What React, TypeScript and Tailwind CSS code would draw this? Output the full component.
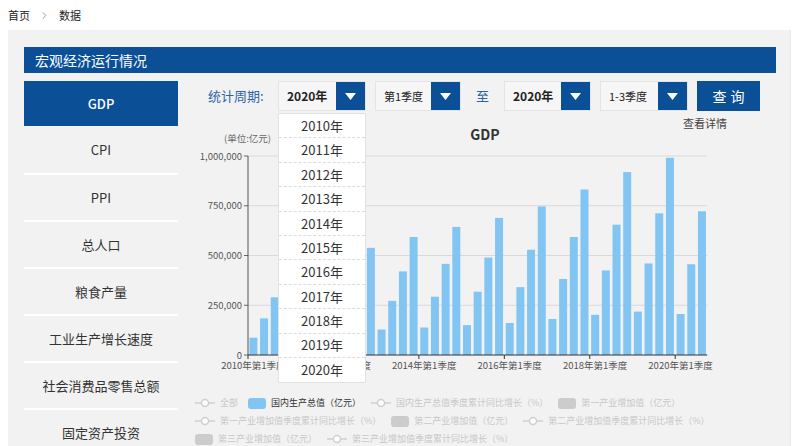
import { ChevronRight } from "lucide-react";

const gdpData = [
  87000, 184000, 290000, 412119,
  104000, 220000, 340000, 487940,
  117000, 245000, 378000, 538580,
  128000, 272000, 420000, 592963,
  138000, 293000, 458000, 643563,
  150000, 318000, 490000, 688858,
  161000, 341000, 529000, 746395,
  181000, 382000, 593000, 832036,
  202000, 425000, 655000, 919281,
  218000, 460000, 712000, 990865,
  206000, 456000, 722000,
];

const sideItems = ["CPI", "PPI", "总人口", "粮食产量", "工业生产增长速度", "社会消费品零售总额", "固定资产投资"];
const years = ["2010年", "2011年", "2012年", "2013年", "2014年", "2015年", "2016年", "2017年", "2018年", "2019年", "2020年"];

const X0 = 248;
const BAND = 10.68;
const Y0 = 355;
const toY = (v: number) => Y0 - (v * 199) / 1000000;

const ArrowBtn = () => (
  <div className="w-[29px] h-full bg-[#0b4f97] flex items-center justify-center">
    <svg width="11" height="7" viewBox="0 0 11 7">
      <path d="M0 0 H11 L5.5 7 Z" fill="#fff" />
    </svg>
  </div>
);

const Select = ({ text, width, bold }: { text: string; width: string; bold?: boolean }) => (
  <div className={`${width} h-[30px] flex bg-[#f6f6f6] border border-[#e4e4e4]`}>
    <div className={`flex-1 flex items-center pl-[8px] text-[#222] ${bold ? "font-bold text-[12px]" : "text-[11px]"}`}>{text}</div>
    <ArrowBtn />
  </div>
);

const LineMark = () => (
  <svg width="20" height="10" viewBox="0 0 20 10" className="shrink-0">
    <line x1="0" y1="5" x2="20" y2="5" stroke="#cfcfcf" strokeWidth="1.5" />
    <circle cx="10" cy="5" r="3.5" fill="#fff" stroke="#cfcfcf" strokeWidth="1.5" />
  </svg>
);

const RectMark = ({ color }: { color: string }) => (
  <div className="w-[18px] h-[11px] rounded-[3px] shrink-0" style={{ backgroundColor: color }} />
);

const legend = [
  { kind: "line", label: "全部" },
  { kind: "blue", label: "国内生产总值（亿元）" },
  { kind: "line", label: "国内生产总值季度累计同比增长（%）" },
  { kind: "gray", label: "第一产业增加值（亿元）" },
  { kind: "line", label: "第一产业增加值季度累计同比增长（%）" },
  { kind: "gray", label: "第二产业增加值（亿元）" },
  { kind: "line", label: "第二产业增加值季度累计同比增长（%）" },
  { kind: "gray", label: "第三产业增加值（亿元）" },
  { kind: "line", label: "第三产业增加值季度累计同比增长（%）" },
];

const Chart = () => {
  const grid = [0, 250000, 500000, 750000, 1000000];
  const labels = ["2010年第1季度", "2012年第1季度", "2014年第1季度", "2016年第1季度", "2018年第1季度", "2020年第1季度"];
  const xEnd = X0 + gdpData.length * BAND;
  return (
    <svg width="600" height="283" viewBox="178 111 600 283" className="block">
      <text x="485" y="140" textAnchor="middle" fontSize="14" fontWeight="bold" fill="#333">GDP</text>
      <text x="727" y="128" textAnchor="end" fontSize="11" fill="#444">查看详情</text>
      <text x="271" y="142" textAnchor="end" fontSize="9.5" fill="#666">(单位:亿元)</text>
      {grid.map((g) => (
        <g key={g}>
          {g > 0 && <line x1={X0} y1={toY(g)} x2={xEnd} y2={toY(g)} stroke="#d9d9d9" strokeWidth="1" />}
          <line x1={X0 - 4} y1={toY(g)} x2={X0} y2={toY(g)} stroke="#666" strokeWidth="1" />
          <text x={X0 - 6} y={toY(g) + 3.5} textAnchor="end" fontSize="9.5" fill="#555">
            {g.toLocaleString("en-US")}
          </text>
        </g>
      ))}
      {gdpData.map((v, i) => (
        <rect key={i} x={X0 + i * BAND + 1.4} y={toY(v)} width="8" height={Y0 - toY(v)} fill="#82c5f3" />
      ))}
      <line x1={X0} y1={toY(1000000)} x2={X0} y2={Y0} stroke="#555" strokeWidth="1" />
      <line x1={X0} y1={Y0} x2={xEnd} y2={Y0} stroke="#333" strokeWidth="1" />
      {labels.map((l, k) => (
        <g key={l}>
          <line x1={X0 + k * 8 * BAND} y1={Y0} x2={X0 + k * 8 * BAND} y2={Y0 + 4} stroke="#333" strokeWidth="1" />
          <text x={X0 + k * 8 * BAND + BAND / 2} y="369" textAnchor="middle" fontSize="9.5" fill="#555">{l}</text>
        </g>
      ))}
    </svg>
  );
};

export default function App() {
  return (
    <div className="min-h-[446px] bg-white font-['Noto_Sans_CJK_SC','Microsoft_YaHei',sans-serif] overflow-hidden">
      <div className="h-[30px] flex items-center pl-2 text-[11px] text-[#222]">
        <span>首页</span>
        <ChevronRight size={11} strokeWidth={1.5} className="mx-[9px] text-[#666]" />
        <span>数据</span>
      </div>
      <div className="mx-2 bg-[#f2f2f2] pt-[17px] pl-4 pr-[14px] h-[416px] border-r border-[#e8e8e8]">
        <div className="h-[26px] bg-[#0b4f97] text-white text-[14px] pl-[11px] flex items-center">宏观经济运行情况</div>
        <div className="flex mt-2">
          <div className="w-[154px] shrink-0">
            <div className="h-[45px] bg-[#0b4f97] text-white text-[13px] font-medium flex items-center justify-center">GDP</div>
            {sideItems.map((s, i) => (
              <div
                key={s}
                className={`${i === 0 ? "h-[49px]" : "h-[47px]"} border-b-2 border-white text-[13px] text-[#333] flex items-center justify-center`}
              >
                {s}
              </div>
            ))}
          </div>
          <div className="flex-1">
            <div className="h-[30px] flex items-center pl-[30px]">
              <div className="w-[70px] text-[13px] text-[#2c64a6]">统计周期:</div>
              <div className="relative">
                <Select text="2020年" width="w-[88px]" bold />
                <div className="absolute left-0 top-[32px] w-[88px] bg-white border border-[#e2e2e2] z-10">
                  {years.map((y, i) => (
                    <div
                      key={y}
                      className={`h-[24.4px] flex items-center justify-center text-[13px] text-[#333] ${i < years.length - 1 ? "border-b border-dashed border-[#dcdcdc]" : ""}`}
                    >
                      {y}
                    </div>
                  ))}
                </div>
              </div>
              <div className="ml-[9px]">
                <Select text="第1季度" width="w-[86px]" />
              </div>
              <div className="w-[43px] text-center text-[13px] text-[#2c64a6]">至</div>
              <Select text="2020年" width="w-[87px]" bold />
              <div className="ml-[9px]">
                <Select text="1-3季度" width="w-[88px]" />
              </div>
              <button className="ml-[9px] w-[63px] h-[30px] bg-[#0b4f97] text-white text-[14px] tracking-[4px] pl-[4px]">查询</button>
            </div>
            <Chart />
            <div className="pl-[17px] w-[590px] flex flex-wrap text-[9px] leading-[18px]">
              {legend.map((l) => (
                <div key={l.label} className="h-[18px] flex items-center gap-[5px] mr-[10px]">
                  {l.kind === "line" && <LineMark />}
                  {l.kind === "blue" && <RectMark color="#82c5f3" />}
                  {l.kind === "gray" && <RectMark color="#cccccc" />}
                  <span className={l.kind === "blue" ? "text-[#333]" : "text-[#c8c8c8]"}>{l.label}</span>
                </div>
              ))}
            </div>
          </div>
        </div>
      </div>
    </div>
  );
}
